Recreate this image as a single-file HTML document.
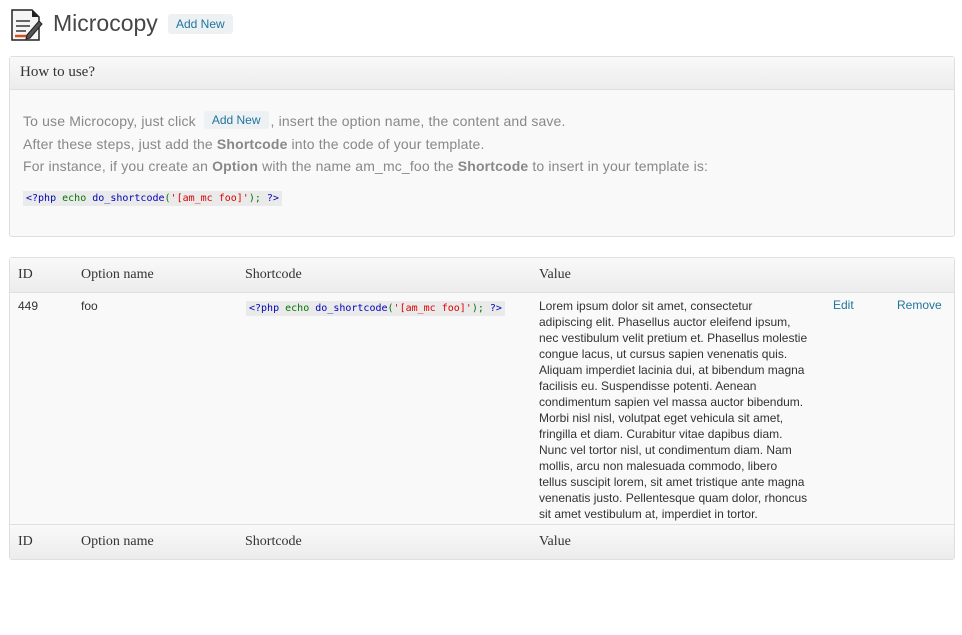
<!DOCTYPE html>
<html><head><meta charset="utf-8"><style>
*{margin:0;padding:0;box-sizing:border-box}
body{width:962px;height:635px;background:#fff;font-family:"Liberation Sans",Arial,sans-serif;color:#333;position:relative;overflow:hidden}
.abs{position:absolute}
.serif{font-family:"Liberation Serif",Georgia,serif}
.btn{background:#eef1f4;color:#21759b;font-size:12px;border-radius:3px;padding:3px 8px;display:inline-block}
code{font-family:"DejaVu Sans Mono","Liberation Mono",monospace;font-size:10px;background:#eaeaea;padding:2px 3px}
.k{color:#0000bb}.e{color:#007700}.f{color:#0000bb}.s{color:#dd0000}
.box{border:1px solid #dfdfdf;border-radius:3px;background:#f9f9f9}
.hdr{background:linear-gradient(#f9f9f9,#ececec);border-bottom:1px solid #dfdfdf}
.th{font-size:14px;color:#333}
</style></head><body>
<svg class="abs" style="left:10px;top:8px" width="34" height="34" viewBox="0 0 34 34">
<path d="M2 2h20l7 7v23H2z" fill="#f5f5f5" stroke="#222" stroke-width="1.5"/>
<path d="M22 2v7h7" fill="#222"/>
<path d="M6 13h14M6 18h14M6 23h10" stroke="#666" stroke-width="2"/>
<path d="M5 28h16" stroke="#d54e21" stroke-width="2.5"/>
<path d="M17 27l12-14 3 3-12 14-4 1z" fill="#555" stroke="#222"/>
</svg>
<div class="abs" style="left:53px;top:10px;font-size:23px;color:#464646">Microcopy</div>
<div class="abs btn" style="left:168px;top:14px">Add New</div>

<div class="abs box" style="left:9px;top:56px;width:946px;height:181px">
<div class="hdr serif" style="height:33px;font-size:15px;padding:7px 10px;color:#333">How to use?</div>
</div>
<div class="abs" style="left:23px;top:110px;font-size:14px;color:#888;line-height:22.5px;white-space:nowrap;letter-spacing:0.15px">
To use Microcopy, just click <span class="btn" style="font-size:12px;margin:0 2px 0 4px;padding:2px 8px;line-height:14px;vertical-align:2px;letter-spacing:0">Add New</span>, insert the option name, the content and save.<br>
After these steps, just add the <b>Shortcode</b> into the code of your template.<br>
For instance, if you create an <b>Option</b> with the name am_mc_foo the <b>Shortcode</b> to insert in your template is:
</div>
<div class="abs" style="left:23px;top:188px"><code><span class="k">&lt;?php</span> <span class="e">echo</span> <span class="f">do_shortcode</span><span class="e">(</span><span class="s">'[am_mc foo]'</span><span class="e">);</span> <span class="k">?&gt;</span></code></div>

<div class="abs box" style="left:9px;top:257px;width:946px;height:303px;background:#f9f9f9">
<div class="hdr" style="height:35px"></div>
<div class="abs" style="left:0;top:266px;width:944px;height:35px;background:linear-gradient(#f9f9f9,#ececec);border-top:1px solid #dfdfdf"></div>
</div>
<div class="abs th serif" style="left:18px;top:267px">ID</div>
<div class="abs th serif" style="left:81px;top:267px">Option name</div>
<div class="abs th serif" style="left:245px;top:267px">Shortcode</div>
<div class="abs th serif" style="left:539px;top:267px">Value</div>
<div class="abs th serif" style="left:18px;top:534px">ID</div>
<div class="abs th serif" style="left:81px;top:534px">Option name</div>
<div class="abs th serif" style="left:245px;top:534px">Shortcode</div>
<div class="abs th serif" style="left:539px;top:534px">Value</div>

<div class="abs" style="left:18px;top:299px;font-size:12px">449</div>
<div class="abs" style="left:81px;top:299px;font-size:12px">foo</div>
<div class="abs" style="left:246px;top:298px"><code><span class="k">&lt;?php</span> <span class="e">echo</span> <span class="f">do_shortcode</span><span class="e">(</span><span class="s">'[am_mc foo]'</span><span class="e">);</span> <span class="k">?&gt;</span></code></div>
<div class="abs" style="left:539px;top:298px;font-size:12px;line-height:16px;color:#333;white-space:nowrap">Lorem ipsum dolor sit amet, consectetur<br>adipiscing elit. Phasellus auctor eleifend ipsum,<br>nec vestibulum velit pretium et. Phasellus molestie<br>congue lacus, ut cursus sapien venenatis quis.<br>Aliquam imperdiet lacinia dui, at bibendum magna<br>facilisis eu. Suspendisse potenti. Aenean<br>condimentum sapien vel massa auctor bibendum.<br>Morbi nisl nisl, volutpat eget vehicula sit amet,<br>fringilla et diam. Curabitur vitae dapibus diam.<br>Nunc vel tortor nisl, ut condimentum diam. Nam<br>mollis, arcu non malesuada commodo, libero<br>tellus suscipit lorem, sit amet tristique ante magna<br>venenatis justo. Pellentesque quam dolor, rhoncus<br>sit amet vestibulum at, imperdiet in tortor.</div>
<div class="abs" style="left:833px;top:298px;font-size:12px;color:#21759b">Edit</div>
<div class="abs" style="left:897px;top:298px;font-size:12px;color:#21759b">Remove</div>
</body></html>
